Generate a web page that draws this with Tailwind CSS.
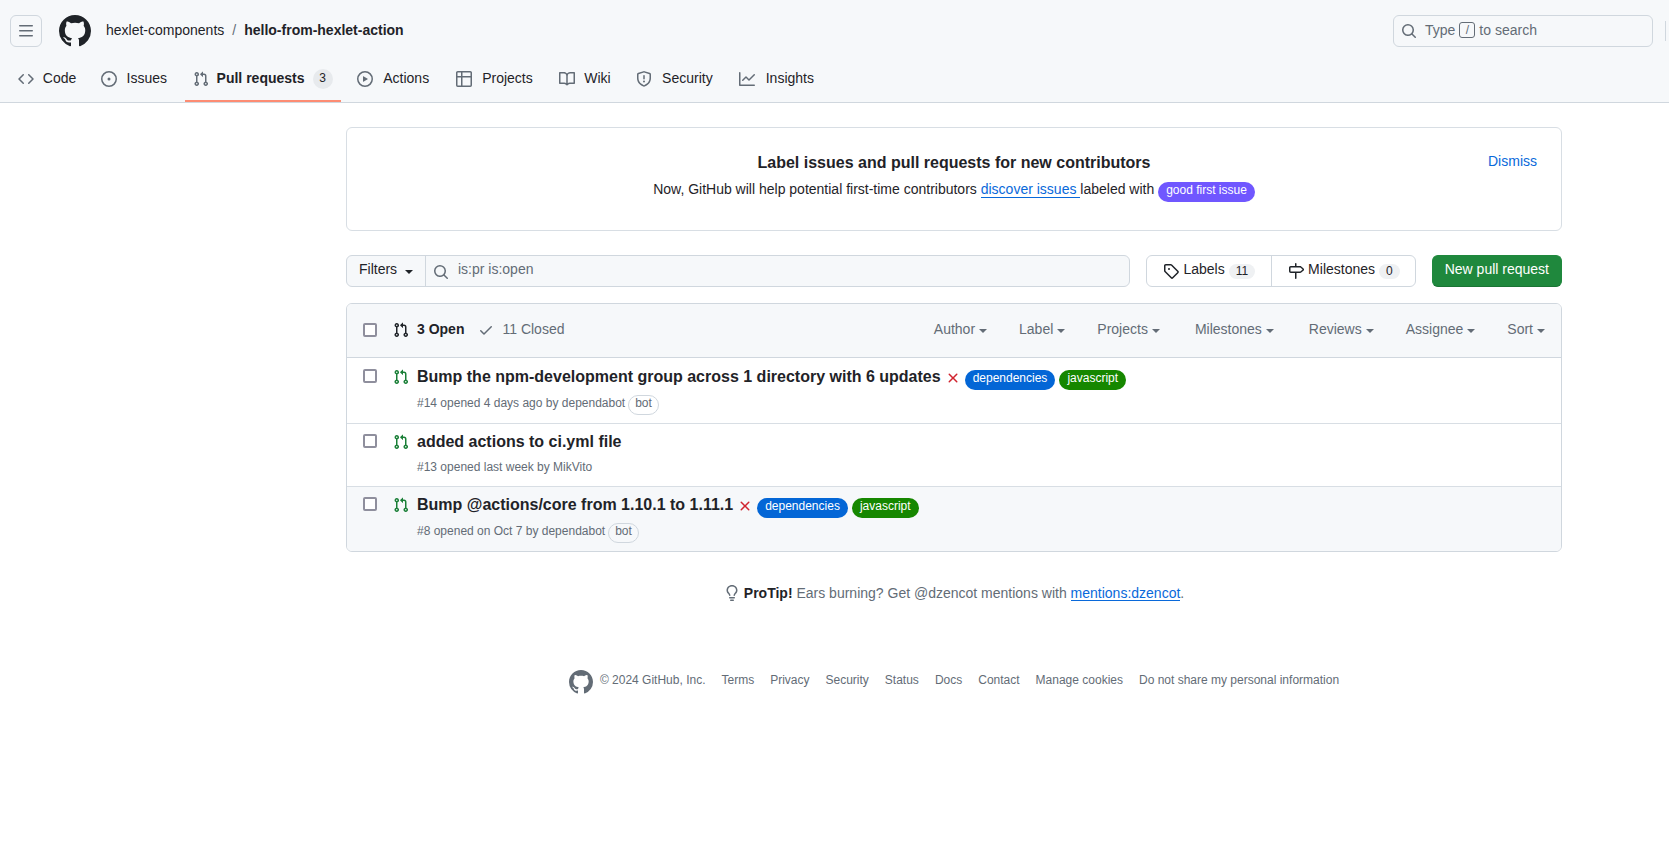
<!DOCTYPE html>
<html lang="en">
<head>
<meta charset="utf-8">
<meta name="viewport" content="width=device-width, initial-scale=1">
<title>Pull requests · hexlet-components/hello-from-hexlet-action</title>
<script src="https://cdn.jsdelivr.net/npm/@tailwindcss/browser@4"></script>
</head>
<body class="min-h-screen bg-white font-['Liberation_Sans',Arial,sans-serif] text-sm leading-5 text-[#1f2328]">

<svg class="hidden" aria-hidden="true">
  <symbol id="mark" viewBox="0 0 16 16"><path d="M8 0c4.42 0 8 3.58 8 8a8.013 8.013 0 0 1-5.45 7.59c-.4.08-.55-.17-.55-.38 0-.27.01-1.13.01-2.2 0-.75-.25-1.23-.54-1.48 1.78-.2 3.65-.88 3.65-3.95 0-.88-.31-1.59-.82-2.15.08-.2.36-1.02-.08-2.12 0 0-.67-.22-2.2.82-.64-.18-1.32-.27-2-.27-.68 0-1.36.09-2 .27-1.53-1.03-2.2-.82-2.2-.82-.44 1.1-.16 1.92-.08 2.12-.51.56-.82 1.28-.82 2.15 0 3.06 1.86 3.75 3.64 3.95-.23.2-.44.55-.51 1.07-.46.21-1.61.55-2.33-.66-.15-.24-.6-.83-1.23-.82-.67.01-.27.38.01.53.34.19.73.9.82 1.13.16.45.68 1.31 2.69.94 0 .67.01 1.3.01 1.49 0 .21-.15.45-.55.38A7.995 7.995 0 0 1 0 8c0-4.42 3.58-8 8-8Z"/></symbol>
  <symbol id="pr" viewBox="0 0 16 16"><path d="M1.5 3.25a2.25 2.25 0 1 1 3 2.122v5.256a2.251 2.251 0 1 1-1.5 0V5.372A2.25 2.25 0 0 1 1.5 3.25Zm5.677-.177L9.573.677A.25.25 0 0 1 10 .854V2.5h1A2.5 2.5 0 0 1 13.5 5v5.628a2.251 2.251 0 1 1-1.5 0V5a1 1 0 0 0-1-1h-1v1.646a.25.25 0 0 1-.427.177L7.177 3.427a.25.25 0 0 1 0-.354ZM3.75 2.5a.75.75 0 1 0 0 1.5.75.75 0 0 0 0-1.5Zm0 9.5a.75.75 0 1 0 0 1.5.75.75 0 0 0 0-1.5Zm8.25.75a.75.75 0 1 0 1.5 0 .75.75 0 0 0-1.5 0Z"/></symbol>
  <symbol id="search" viewBox="0 0 16 16"><path d="M10.68 11.74a6 6 0 0 1-7.922-8.982 6 6 0 0 1 8.982 7.922l3.04 3.04a.749.749 0 0 1-.326 1.275.749.749 0 0 1-.734-.215ZM11.5 7a4.499 4.499 0 1 0-8.997 0A4.499 4.499 0 0 0 11.5 7Z"/></symbol>
  <symbol id="x" viewBox="0 0 16 16"><path d="M3.72 3.72a.75.75 0 0 1 1.06 0L8 6.94l3.22-3.22a.749.749 0 0 1 1.275.326.749.749 0 0 1-.215.734L9.06 8l3.22 3.22a.749.749 0 0 1-.326 1.275.749.749 0 0 1-.734-.215L8 9.06l-3.22 3.22a.751.751 0 0 1-1.042-.018.751.751 0 0 1-.018-1.042L6.94 8 3.72 4.78a.75.75 0 0 1 0-1.06Z"/></symbol>
  <symbol id="caret" viewBox="0 0 8 4"><path d="M0 0h8L4 4Z"/></symbol>
</svg>

<header class="border-b border-[#d0d7de] bg-[#f6f8fa]">
  <div class="flex items-center pt-[15px] pl-[10px]">
    <button type="button" aria-label="Open menu" class="flex size-8 items-center justify-center rounded-md border border-[#d0d7de] text-[#636c76]">
      <svg class="size-4" viewBox="0 0 16 16" fill="currentColor"><path d="M1 2.75A.75.75 0 0 1 1.75 2h12.5a.75.75 0 0 1 0 1.5H1.75A.75.75 0 0 1 1 2.75Zm0 5A.75.75 0 0 1 1.75 7h12.5a.75.75 0 0 1 0 1.5H1.75A.75.75 0 0 1 1 7.75ZM1.75 12h12.5a.75.75 0 0 1 0 1.5H1.75a.75.75 0 0 1 0-1.5Z"/></svg>
    </button>
    <a href="#" aria-label="Homepage" class="ml-[17px]"><svg class="size-8" fill="currentColor"><use href="#mark"/></svg></a>
    <nav aria-label="Breadcrumb" class="ml-[15px] flex pb-0.5">
      <a href="#">hexlet-components</a>
      <span class="px-2 text-[#636c76]">/</span>
      <a href="#" class="font-bold">hello-from-hexlet-action</a>
    </nav>
    <button type="button" class="ml-auto flex h-8 w-[260px] items-center rounded-md border border-[#d0d7de] px-[7px] text-[#636c76]">
      <svg class="size-4" fill="currentColor"><use href="#search"/></svg>
      <span class="ml-2 flex pb-0.5">Type <kbd class="mx-1 flex h-4 w-4 items-center justify-center self-center rounded-[3px] border border-[#636c76] font-['Liberation_Sans'] text-xs">/</kbd>to search</span>
    </button>
    <span class="ml-3 h-5 w-1 border-l border-[#d0d7de]"></span>
  </div>
  <nav aria-label="Repository" class="mt-2 flex gap-2 px-[10px] [&_svg]:size-4 [&_svg]:shrink-0 [&_svg]:fill-[#636c76] [&>a]:flex [&>a]:h-[47px] [&>a]:items-center [&>a]:gap-2 [&>a]:px-2 [&_b]:flex [&_b]:flex-col [&_b]:items-center [&_b]:pb-0.5 [&_b]:font-normal [&_b]:before:invisible [&_b]:before:h-0 [&_b]:before:font-bold [&_b]:before:content-[attr(data-content)]">
    <a href="#"><svg viewBox="0 0 16 16"><path d="m11.28 3.22 4.25 4.25a.75.75 0 0 1 0 1.06l-4.25 4.25a.749.749 0 0 1-1.275-.326.749.749 0 0 1 .215-.734L13.94 8l-3.72-3.72a.749.749 0 0 1 .326-1.275.749.749 0 0 1 .734.215Zm-6.56 0a.751.751 0 0 1 1.042.018.751.751 0 0 1 .018 1.042L2.06 8l3.72 3.72a.749.749 0 0 1-.326 1.275.749.749 0 0 1-.734-.215L.47 8.53a.75.75 0 0 1 0-1.06Z"/></svg><b data-content="Code">Code</b></a>
    <a href="#"><svg viewBox="0 0 16 16"><path d="M8 9.5a1.5 1.5 0 1 0 0-3 1.5 1.5 0 0 0 0 3Z"/><path d="M8 0a8 8 0 1 1 0 16A8 8 0 0 1 8 0ZM1.5 8a6.5 6.5 0 1 0 13 0 6.5 6.5 0 0 0-13 0Z"/></svg><b data-content="Issues">Issues</b></a>
    <a href="#" aria-current="page" class="border-b-2 border-[#fd8c73] pt-0.5"><svg><use href="#pr"/></svg><strong class="pb-0.5 font-bold">Pull requests</strong><span class="h-5 min-w-5 rounded-full bg-[#e7eaed] px-1.5 text-center text-xs leading-[18px]">3</span></a>
    <a href="#"><svg viewBox="0 0 16 16"><path d="M8 0a8 8 0 1 1 0 16A8 8 0 0 1 8 0ZM1.5 8a6.5 6.5 0 1 0 13 0 6.5 6.5 0 0 0-13 0Zm4.879-2.773 4.264 2.559a.25.25 0 0 1 0 .428l-4.264 2.559A.25.25 0 0 1 6 10.559V5.442a.25.25 0 0 1 .379-.215Z"/></svg><b data-content="Actions">Actions</b></a>
    <a href="#"><svg viewBox="0 0 16 16"><path d="M0 1.75C0 .784.784 0 1.75 0h12.5C15.216 0 16 .784 16 1.75v12.5A1.75 1.75 0 0 1 14.25 16H1.75A1.75 1.75 0 0 1 0 14.25ZM6.5 6.5v8h7.75a.25.25 0 0 0 .25-.25V6.5Zm8-1.5V1.75a.25.25 0 0 0-.25-.25H6.5V5Zm-13 1.5v7.75c0 .138.112.25.25.25H5v-8ZM5 5V1.5H1.75a.25.25 0 0 0-.25.25V5Z"/></svg><b data-content="Projects">Projects</b></a>
    <a href="#"><svg viewBox="0 0 16 16"><path d="M0 1.75A.75.75 0 0 1 .75 1h4.253c1.227 0 2.317.59 3 1.501A3.743 3.743 0 0 1 11.006 1h4.245a.75.75 0 0 1 .75.75v10.5a.75.75 0 0 1-.75.75h-4.507a2.25 2.25 0 0 0-1.591.659l-.622.621a.75.75 0 0 1-1.06 0l-.622-.621A2.25 2.25 0 0 0 5.258 13H.75a.75.75 0 0 1-.75-.75Zm7.251 10.324.004-5.073-.002-2.253A2.25 2.25 0 0 0 5.003 2.5H1.5v9h3.757a3.75 3.75 0 0 1 1.994.574ZM8.755 4.75l-.004 7.322a3.752 3.752 0 0 1 1.992-.572H14.5v-9h-3.495a2.25 2.25 0 0 0-2.25 2.25Z"/></svg><b data-content="Wiki">Wiki</b></a>
    <a href="#"><svg viewBox="0 0 16 16"><path d="M7.467.133a1.748 1.748 0 0 1 1.066 0l5.25 1.68A1.75 1.75 0 0 1 15 3.48V7c0 1.566-.32 3.182-1.303 4.682-.983 1.498-2.585 2.813-5.032 3.855a1.697 1.697 0 0 1-1.33 0c-2.447-1.042-4.049-2.357-5.032-3.855C1.32 10.182 1 8.566 1 7V3.48a1.75 1.75 0 0 1 1.217-1.667Zm.61 1.429a.25.25 0 0 0-.153 0l-5.25 1.68a.25.25 0 0 0-.174.238V7c0 1.358.275 2.666 1.057 3.86.784 1.194 2.121 2.34 4.366 3.297a.196.196 0 0 0 .154 0c2.245-.956 3.582-2.104 4.366-3.298C13.225 9.666 13.5 8.36 13.5 7V3.48a.251.251 0 0 0-.174-.237l-5.25-1.68ZM8.75 4.75v3a.75.75 0 0 1-1.5 0v-3a.75.75 0 0 1 1.5 0ZM9 10.5a1 1 0 1 1-2 0 1 1 0 0 1 2 0Z"/></svg><b data-content="Security">Security</b></a>
    <a href="#"><svg viewBox="0 0 16 16"><path d="M1.5 1.75V13.5h13.75a.75.75 0 0 1 0 1.5H.75a.75.75 0 0 1-.75-.75V1.75a.75.75 0 0 1 1.5 0Zm14.28 2.53-5.25 5.25a.75.75 0 0 1-1.06 0L7 7.06 4.28 9.78a.751.751 0 0 1-1.042-.018.751.751 0 0 1-.018-1.042l3.25-3.25a.75.75 0 0 1 1.06 0L10 7.94l4.72-4.72a.751.751 0 0 1 1.042.018.751.751 0 0 1 .018 1.042Z"/></svg><b data-content="Insights">Insights</b></a>
  </nav>
</header>

<div class="pr-[107px] pl-[346px]">
<main class="pt-6">
  <section class="grid grid-cols-[1fr_auto_1fr] items-start rounded-md border border-[#d8dee4] px-6 pt-[23px] pb-[27px]">
    <div class="col-start-2 text-center">
      <h2 class="text-base leading-6 font-bold">Label issues and pull requests for new contributors</h2>
      <p class="mt-1 flex h-6 items-start whitespace-pre">Now, GitHub will help potential first-time contributors <a href="#" class="h-[19px] border-b border-[#0969da] text-[#0969da]">discover issues </a>labeled with <a href="#" class="mt-[3px] h-5 rounded-full bg-[#7057ff] px-2 text-xs leading-4 text-white">good first issue</a></p>
    </div>
    <button type="button" class="justify-self-end text-[#0969da]">Dismiss</button>
  </section>

  <div class="mt-6 flex">
    <form class="flex h-8 grow rounded-md border border-[#d0d7de] bg-[#f6f8fa]">
      <button type="button" class="flex w-[79px] items-center gap-2 border-r border-[#d0d7de] pb-1 pl-3">Filters<svg class="mt-1.5 h-1 w-2" fill="currentColor"><use href="#caret"/></svg></button>
      <label for="q" class="mt-2 ml-[7px] text-[#636c76]"><svg class="size-4" fill="currentColor" aria-label="Search"><use href="#search"/></svg></label>
      <input id="q" type="text" value="is:pr is:open" class="grow bg-transparent pb-1 pl-[9px] text-[#636c76] outline-none">
    </form>
    <nav aria-label="Issue tools" class="ml-4 flex h-8 rounded-md border border-[#d0d7de]">
      <a href="#" class="flex items-center px-4"><svg class="mr-1 size-4" viewBox="0 0 16 16" fill="currentColor"><path d="M1 7.775V2.75C1 1.784 1.784 1 2.75 1h5.025c.464 0 .91.184 1.238.513l6.25 6.25a1.75 1.75 0 0 1 0 2.474l-5.026 5.026a1.75 1.75 0 0 1-2.474 0l-6.25-6.25A1.752 1.752 0 0 1 1 7.775Zm1.5 0c0 .066.026.13.073.177l6.25 6.25a.25.25 0 0 0 .354 0l5.025-5.025a.25.25 0 0 0 0-.354l-6.25-6.25a.25.25 0 0 0-.177-.073H2.75a.25.25 0 0 0-.25.25ZM6 5a1 1 0 1 1 0 2 1 1 0 0 1 0-2Z"/></svg><span class="pb-1">Labels</span><span class="ml-1 rounded-full bg-[#eff1f3] px-[7px] pb-px text-xs leading-[14px]">11</span></a>
      <a href="#" class="flex items-center border-l border-[#d0d7de] pr-[15px] pl-4"><svg class="mr-1 size-4" viewBox="0 0 16 16" fill="currentColor"><path d="M7.75 0a.75.75 0 0 1 .75.75V3h3.634c.414 0 .814.147 1.13.414l2.07 1.75a1.75 1.75 0 0 1 0 2.672l-2.07 1.75a1.75 1.75 0 0 1-1.13.414H8.5v5.25a.75.75 0 0 1-1.5 0V10H2.75A1.75 1.75 0 0 1 1 8.25v-3.5C1 3.784 1.784 3 2.75 3H7V.75A.75.75 0 0 1 7.75 0Zm4.384 8.5a.25.25 0 0 0 .161-.06l2.07-1.75a.248.248 0 0 0 0-.38l-2.07-1.75a.25.25 0 0 0-.161-.06H2.75a.25.25 0 0 0-.25.25v3.5c0 .138.112.25.25.25h9.384Z"/></svg><span class="pb-1">Milestones</span><span class="ml-1 rounded-full bg-[#eff1f3] px-[7px] pb-px text-xs leading-[14px]">0</span></a>
    </nav>
    <a href="#" class="ml-4 h-8 rounded-md border border-[#1f883d] border-b-[#1a7434] bg-[#1f883d] px-3 leading-[26px] text-white">New pull request</a>
  </div>

  <section class="mt-4 overflow-hidden rounded-md border border-[#d0d7de]">
    <div class="flex h-[54px] items-center border-b border-[#d0d7de] bg-[#f6f8fa] pb-0.5 pl-4 text-[#636c76]">
      <input type="checkbox" aria-label="Select all" class="size-3.5 appearance-none rounded-[2px] border-2 border-[#8f8f9d] bg-white">
      <a href="#" class="ml-4 flex items-center font-bold text-[#1f2328]"><svg class="mr-2 size-4" fill="currentColor"><use href="#pr"/></svg><span class="pb-0.5">3 Open</span></a>
      <a href="#" class="ml-3.5 flex items-center"><svg class="mr-2 size-4" viewBox="0 0 16 16" fill="currentColor"><path d="M13.78 4.22a.75.75 0 0 1 0 1.06l-7.25 7.25a.75.75 0 0 1-1.06 0L2.22 9.28a.751.751 0 0 1 .018-1.042.751.751 0 0 1 1.042-.018L6 10.94l6.72-6.72a.75.75 0 0 1 1.06 0Z"/></svg><span class="pb-0.5">11 Closed</span></a>
      <div class="ml-auto flex [&>button]:flex [&>button]:items-center [&>button]:gap-1 [&>button]:px-4 [&>button]:pb-0.5 [&_svg]:mt-1 [&_svg]:h-1 [&_svg]:w-2 [&_svg]:fill-current">
        <button type="button">Author<svg><use href="#caret"/></svg></button>
        <button type="button">Label<svg><use href="#caret"/></svg></button>
        <button type="button">Projects<svg><use href="#caret"/></svg></button>
        <button type="button" class="mx-[3px]">Milestones<svg><use href="#caret"/></svg></button>
        <button type="button">Reviews<svg><use href="#caret"/></svg></button>
        <button type="button">Assignee<svg><use href="#caret"/></svg></button>
        <button type="button">Sort<svg><use href="#caret"/></svg></button>
      </div>
    </div>

    <ul class="divide-y divide-[#d8dee4]">
      <li class="flex items-start pt-[7px] pb-2.5 pl-4">
        <input type="checkbox" aria-label="Select #14" class="mt-1 size-3.5 appearance-none rounded-[2px] border-2 border-[#8f8f9d] bg-white">
        <svg class="mt-1 mr-2 ml-4 size-4 fill-[#1a7f37]"><use href="#pr"/></svg>
        <div>
          <div class="flex h-6 items-start"><a href="#" class="text-base leading-6 font-bold">Bump the npm-development group across 1 directory with 6 updates</a><svg class="mt-[5px] ml-1 size-4 fill-[#d1242f]"><use href="#x"/></svg><a href="#" class="mt-[5px] ml-1 h-5 rounded-full bg-[#0366d6] px-2 text-xs leading-4 text-white">dependencies</a><a href="#" class="mt-[5px] ml-1 h-5 rounded-full bg-[#168700] px-2 text-xs leading-4 text-white">javascript</a></div>
          <p class="mt-1 flex h-5 text-xs leading-5 text-[#636c76]">#14 opened 4 days ago by dependabot<span class="mt-0.5 ml-[3px] h-5 rounded-full border border-[#d0d7de] px-1.5 leading-[14px]">bot</span></p>
        </div>
      </li>
      <li class="flex items-start pt-1.5 pb-2.5 pl-4">
        <input type="checkbox" aria-label="Select #13" class="mt-1 size-3.5 appearance-none rounded-[2px] border-2 border-[#8f8f9d] bg-white">
        <svg class="mt-1 mr-2 ml-4 size-4 fill-[#1a7f37]"><use href="#pr"/></svg>
        <div>
          <a href="#" class="block text-base leading-6 font-bold">added actions to ci.yml file</a>
          <p class="mt-1 text-xs leading-[18px] text-[#636c76]">#13 opened last week by MikVito</p>
        </div>
      </li>
      <li class="flex items-start bg-[#f6f8fa] pt-1.5 pb-2.5 pl-4">
        <input type="checkbox" aria-label="Select #8" class="mt-1 size-3.5 appearance-none rounded-[2px] border-2 border-[#8f8f9d] bg-white">
        <svg class="mt-1 mr-2 ml-4 size-4 fill-[#1a7f37]"><use href="#pr"/></svg>
        <div>
          <div class="flex h-6 items-start"><a href="#" class="text-base leading-6 font-bold">Bump @actions/core from 1.10.1 to 1.11.1</a><svg class="mt-[5px] ml-1 size-4 fill-[#d1242f]"><use href="#x"/></svg><a href="#" class="mt-[5px] ml-1 h-5 rounded-full bg-[#0366d6] px-2 text-xs leading-4 text-white">dependencies</a><a href="#" class="mt-[5px] ml-1 h-5 rounded-full bg-[#168700] px-2 text-xs leading-4 text-white">javascript</a></div>
          <p class="mt-1 flex h-5 text-xs leading-5 text-[#636c76]">#8 opened on Oct 7 by dependabot<span class="mt-0.5 ml-[3px] h-5 rounded-full border border-[#d0d7de] px-1.5 leading-[14px]">bot</span></p>
        </div>
      </li>
    </ul>
  </section>

  <p class="mt-[31px] flex items-start justify-center whitespace-pre text-[#636c76]"><svg class="mt-0.5 mr-1 size-4" viewBox="0 0 16 16" fill="currentColor"><path d="M8 1.5c-2.363 0-4 1.69-4 3.75 0 .984.424 1.625.984 2.304l.214.253c.223.264.47.556.673.848.284.411.537.896.621 1.49a.75.75 0 0 1-1.484.211c-.04-.282-.163-.547-.37-.847a8.456 8.456 0 0 0-.542-.68c-.084-.1-.173-.205-.268-.32C3.201 7.75 2.5 6.766 2.5 5.25 2.5 2.31 4.863 0 8 0s5.5 2.31 5.5 5.25c0 1.516-.701 2.5-1.328 3.259-.095.115-.184.22-.268.319-.207.245-.383.453-.541.681-.208.3-.33.565-.37.847a.751.751 0 0 1-1.485-.212c.084-.593.337-1.078.621-1.489.203-.292.45-.584.673-.848.075-.088.147-.173.213-.253.561-.679.985-1.32.985-2.304 0-2.06-1.637-3.75-4-3.75ZM5.75 12h4.5a.75.75 0 0 1 0 1.5h-4.5a.75.75 0 0 1 0-1.5ZM6 15.25a.75.75 0 0 1 .75-.75h2.5a.75.75 0 0 1 0 1.5h-2.5a.75.75 0 0 1-.75-.75Z"/></svg><strong class="font-bold text-[#1f2328]">ProTip!</strong> Ears burning? Get @dzencot mentions with <a href="#" class="h-[18px] border-b border-[#0969da] text-[#0969da]">mentions:dzencot</a>.</p>
</main>

<footer class="mt-[67px] flex items-start justify-center pb-10 text-xs leading-5 text-[#636c76]">
  <a href="#" aria-label="GitHub" class="mr-[7px]"><svg class="size-6" fill="currentColor"><use href="#mark"/></svg></a>
  <span class="mr-4">© 2024 GitHub, Inc.</span>
  <nav aria-label="Footer" class="flex gap-4">
    <a href="#">Terms</a><a href="#">Privacy</a><a href="#">Security</a><a href="#">Status</a><a href="#">Docs</a><a href="#">Contact</a><button type="button">Manage cookies</button><button type="button">Do not share my personal information</button>
  </nav>
</footer>
</div>
</body>
</html>
